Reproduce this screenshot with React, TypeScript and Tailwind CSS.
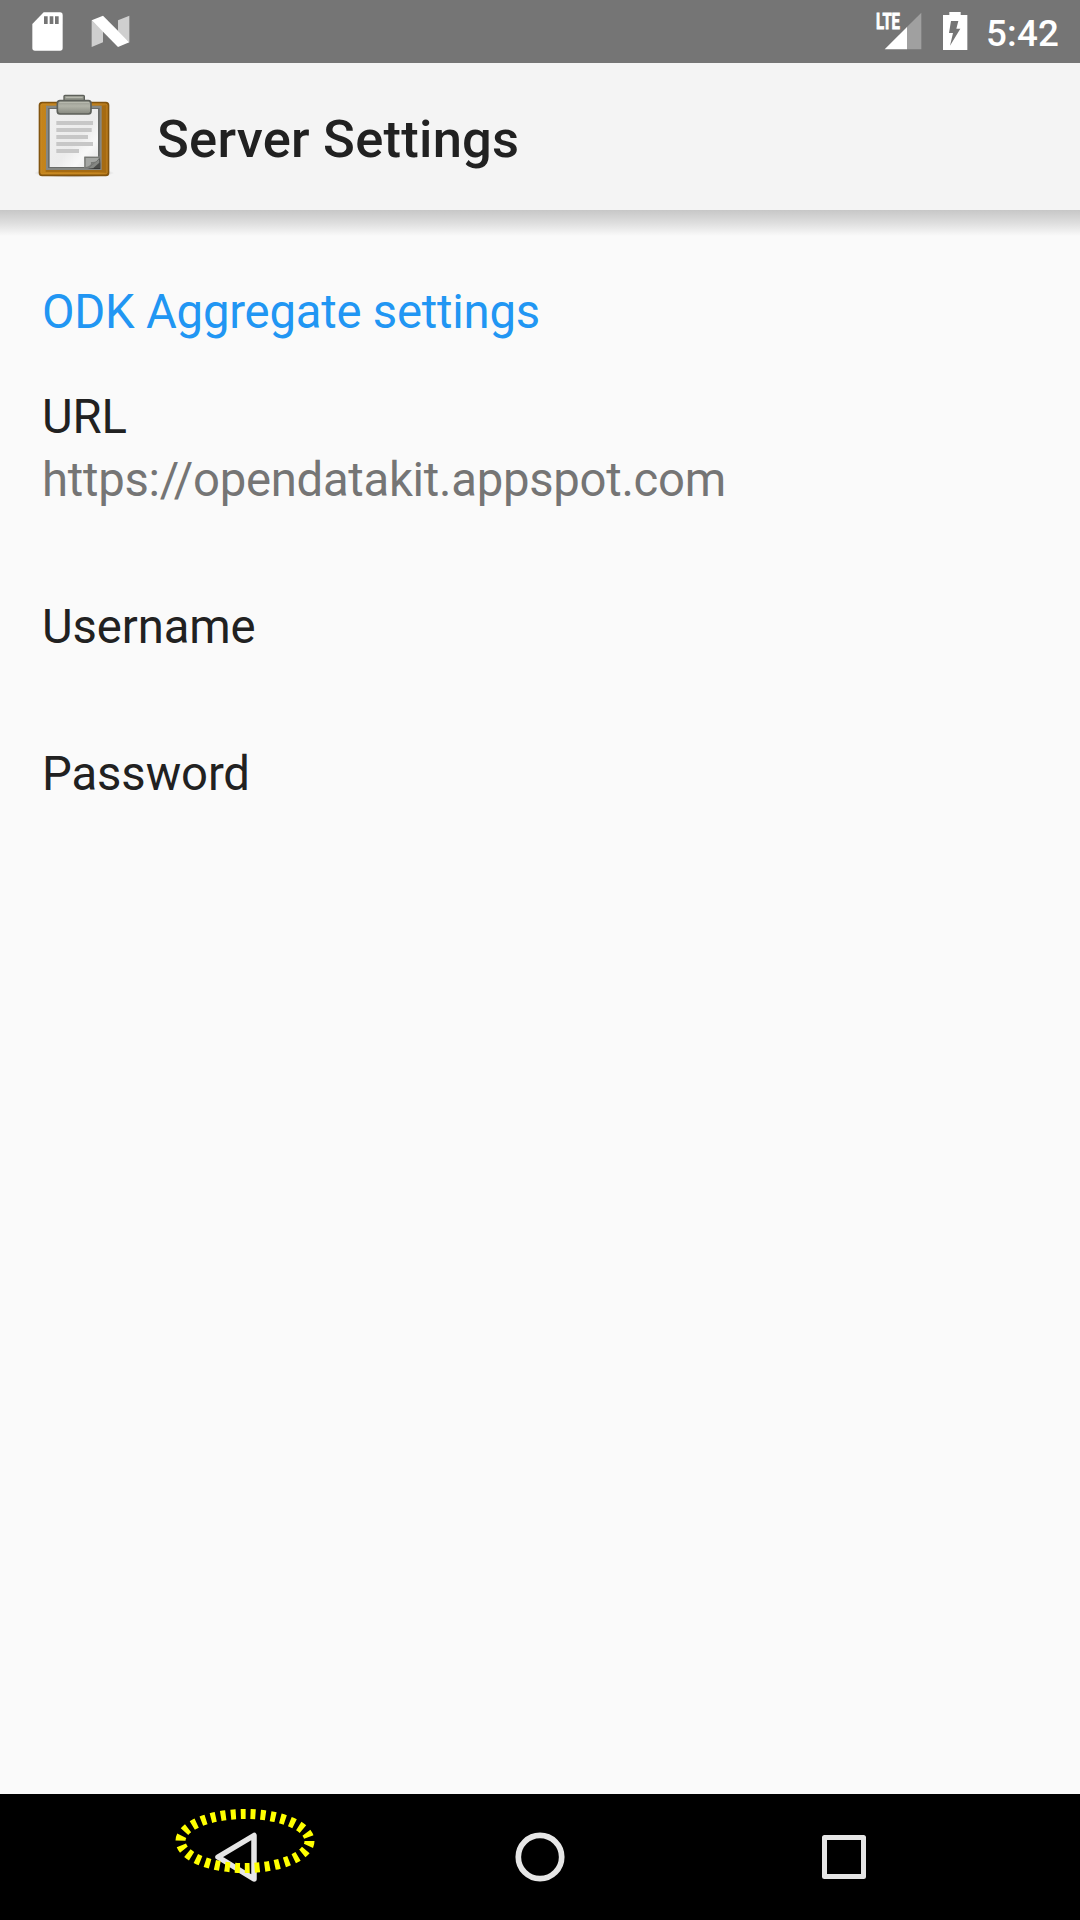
function StatusBar() {
  return (
    <div className="flex h-[63px] items-center justify-between bg-[#757575]">
      <div className="flex pl-[30px]">
        <svg className="h-[63px] w-[40px]" viewBox="90 0 120 189">
          <path
            d="M131 37H180Q188 37 188 45V144Q188 152 180 152H105Q97 152 97 144V72Z"
            fill="#fff"
          />
          <path d="M132 49h11v23h-11zM149 49h11v23h-11zM165 49h11v23h-11z" fill="#757575" />
        </svg>
        <svg className="ml-[20px] h-[63px] w-[42px]" viewBox="270 0 126 189">
          <path d="M275 61 309 94V127L275 141ZM354 61 388 47V127L354 94Z" fill="#cfcfcf" />
          <path d="M275 61 309 47 388 127 354 141Z" fill="#fff" />
        </svg>
      </div>
      <div className="flex items-center">
        <svg className="h-[63px] w-[50px]" viewBox="42 0 150 189">
          <path d="M184 38V148H140V82Z" fill="#a0a0a0" />
          <path d="M141 81V148H74Z" fill="#fff" />
          <text
            x="48"
            y="87"
            textLength="72"
            lengthAdjust="spacingAndGlyphs"
            fontFamily="Roboto, sans-serif"
            fontSize="66"
            fontWeight="700"
            fill="#fff"
            stroke="#fff"
            strokeWidth="2.500"
          >
            LTE
          </text>
        </svg>
        <svg className="ml-[16px] h-[63px] w-[30px]" viewBox="240 0 90 189">
          <path d="M268 36h34v9h20v105h-73V45h19z" fill="#fff" />
          <path d="M273 63H295L289 86H301L270 137L279 99H267Z" fill="#757575" />
        </svg>
        <span className="ml-[16px] w-[94px] pt-[5px] text-[36.75px] leading-[60px] font-medium tracking-[0.15px] text-white">
          5:42
        </span>
      </div>
    </div>
  );
}

function ClipboardIcon() {
  return (
    <svg className="h-[90px] w-[80px]" viewBox="45 30 240 270">
      <defs>
        <linearGradient id="board" x1="0" x2="1" y1="0" y2="0">
          <stop offset="0" stopColor="#c4841c" />
          <stop offset="0.85" stopColor="#b97a18" />
          <stop offset="1" stopColor="#a5690f" />
        </linearGradient>
        <linearGradient id="paper" x1="0" x2="1" y1="0" y2="1">
          <stop offset="0" stopColor="#f0f0f0" />
          <stop offset="0.55" stopColor="#ececec" />
          <stop offset="0.75" stopColor="#f8f8f8" />
          <stop offset="1" stopColor="#e2e2e2" />
        </linearGradient>
        <linearGradient id="clip" x1="0" x2="0" y1="0" y2="1">
          <stop offset="0" stopColor="#94968c" />
          <stop offset="0.4" stopColor="#b1b3a8" />
          <stop offset="1" stopColor="#85877e" />
        </linearGradient>
        <linearGradient id="fold" x1="0" x2="1" y1="0" y2="1">
          <stop offset="0" stopColor="#777" />
          <stop offset="0.35" stopColor="#aaa" />
          <stop offset="0.6" stopColor="#777" />
          <stop offset="0.8" stopColor="#333" />
        </linearGradient>
        <radialGradient id="ground">
          <stop offset="0.7" stopColor="#000" stopOpacity="0.18" />
          <stop offset="1" stopColor="#000" stopOpacity="0" />
        </radialGradient>
      </defs>
      <ellipse cx="162" cy="279" rx="121" ry="14" fill="url(#ground)" />
      <rect x="58.500" y="68" width="207" height="218" rx="8" fill="url(#board)" stroke="#82540f" strokeWidth="5" />
      <rect x="63" y="72" width="198" height="209" rx="4" fill="none" stroke="#cd902e" strokeWidth="2" />
      <path d="M246 78h11v198h-180v-7h169z" fill="#a56b13" />
      <rect x="78" y="77" width="167" height="193" fill="#858783" />
      <rect x="84" y="84" width="155" height="180" fill="#696b69" />
      <path d="M89 87H234V231H195V261H89Z" fill="url(#paper)" />
      <path d="M109 123h110v12H109zM109 144h106v12H109zM109 165h95v12H109zM109 186h110v12H109zM109 207h68v12H109z" fill="#c7c7c7" />
      <path d="M193 230H241V267H193Z" fill="url(#fold)" />
      <path d="M195 264V232H239Q234 250 215 248Q218 259 195 264Z" fill="#a4a6a3" stroke="#777975" strokeWidth="4" />
      <path d="M206 265 240 235V265Z" fill="#4a4b49" />
      <path d="M206 264 238 237V248L220 264Z" fill="#858783" />
      <rect x="132" y="46" width="61" height="28" rx="3" fill="#92958b" stroke="#5d605a" strokeWidth="4" />
      <rect x="112" y="62" width="101" height="40" rx="8" fill="url(#clip)" stroke="#5d605a" strokeWidth="5" />
      <path d="M118 67H207M137 52H188" stroke="#bcbeb4" strokeWidth="3" />
    </svg>
  );
}

function AppBar() {
  return (
    <header className="flex h-[147px] items-start bg-[#f4f4f4]">
      <div className="pt-[27px] pl-[35px]">
        <ClipboardIcon />
      </div>
      <h1 className="ml-[42px] pt-[44px] text-[52.5px] leading-[64px] font-medium tracking-[0.25px] text-[#212121]">
        Server Settings
      </h1>
    </header>
  );
}

function Preference({ title, summary }: { title: string; summary?: string }) {
  return (
    <div className="pb-[84px]">
      <div className="leading-[63px] tracking-[-0.1px] text-[#212121]">{title}</div>
      {summary && <div className="leading-[63px] tracking-[-0.27px] text-[#757575]">{summary}</div>}
    </div>
  );
}

function NavigationBar() {
  return (
    <nav className="h-[126px] bg-black">
      <svg className="block h-[126px] w-[1080px]" viewBox="0 0 1080 126" fill="none">
        <g stroke="#e6e6e6" strokeLinejoin="round">
          <path d="M218 63 254 41.500V85Z" strokeWidth="5.500" />
          <circle cx="540" cy="63" r="21.700" strokeWidth="5.700" />
          <rect x="824.500" y="43.500" width="39" height="39" strokeWidth="5" />
        </g>
        <ellipse cx="245" cy="47" rx="64.500" ry="27" stroke="#ff0" strokeWidth="10" strokeDasharray="5 5" />
      </svg>
    </nav>
  );
}

export default function App() {
  return (
    <div className="flex h-[1920px] w-[1080px] flex-col bg-[#fafafa] font-['Roboto',sans-serif]">
      <StatusBar />
      <AppBar />
      <div className="h-[26px] bg-linear-to-b from-[#c7c7c7] via-[#dedede] to-[#fafafa]" />
      <main className="flex-1 px-[42px] pt-[45px] text-[47.25px]">
        <h2 className="mb-[42px] leading-[63px] tracking-[-0.22px] text-[#2196f3]">ODK Aggregate settings</h2>
        <Preference title="URL" summary="https://opendatakit.appspot.com" />
        <Preference title="Username" />
        <Preference title="Password" />
      </main>
      <NavigationBar />
    </div>
  );
}
